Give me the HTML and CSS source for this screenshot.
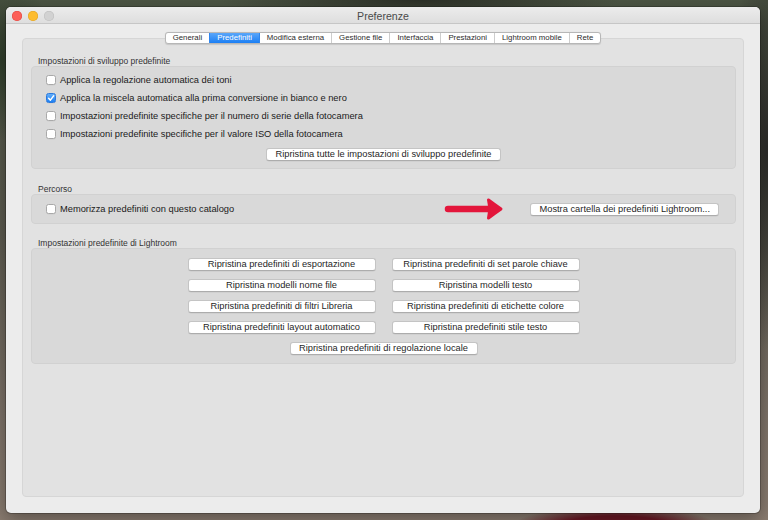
FILE: index.html
```html
<!DOCTYPE html>
<html lang="it">
<head>
<meta charset="utf-8">
<title>Preferenze</title>
<link rel="stylesheet" href="styles.css">
</head>
<body>
<div class="window">
  <div class="titlebar">
    <div class="lights">
      <span class="light red"></span>
      <span class="light yellow"></span>
      <span class="light gray"></span>
    </div>
    <div class="title">Preferenze</div>
    <div></div>
  </div>
  <div class="content">
    <div class="tabs">
      <span class="tab">Generali</span>
      <span class="tab active">Predefiniti</span>
      <span class="tab">Modifica esterna</span>
      <span class="tab">Gestione file</span>
      <span class="tab">Interfaccia</span>
      <span class="tab">Prestazioni</span>
      <span class="tab">Lightroom mobile</span>
      <span class="tab">Rete</span>
    </div>
    <div class="tabview">
      <div class="group-label">Impostazioni di sviluppo predefinite</div>
      <div class="group group-develop">
        <div class="check"><span class="box"></span><span class="check-text">Applica la regolazione automatica dei toni</span></div>
        <div class="check"><span class="box checked"><svg viewBox="0 0 10 10" width="10" height="10"><path d="M2.6 5.3 L4.4 7.1 L7.6 2.9" fill="none" stroke="#fff" stroke-width="1.5" stroke-linecap="round" stroke-linejoin="round"/></svg></span><span class="check-text">Applica la miscela automatica alla prima conversione in bianco e nero</span></div>
        <div class="check"><span class="box"></span><span class="check-text">Impostazioni predefinite specifiche per il numero di serie della fotocamera</span></div>
        <div class="check"><span class="box"></span><span class="check-text">Impostazioni predefinite specifiche per il valore ISO della fotocamera</span></div>
        <div class="btn-row"><span class="btn">Ripristina tutte le impostazioni di sviluppo predefinite</span></div>
      </div>

      <div class="group-label label-path">Percorso</div>
      <div class="group group-path">
        <div class="check"><span class="box"></span><span class="check-text">Memorizza predefiniti con questo catalogo</span></div>
        <svg class="arrow" viewBox="0 0 60 24" width="60" height="24">
          <path d="M4 12 H47" stroke="#e3163b" stroke-width="6.5" stroke-linecap="round" fill="none"/>
          <path d="M44.5 3 Q50.5 7.5 57 12 Q50.5 16.5 44.5 21 Q46.5 12 44.5 3 Z" fill="#e3163b" stroke="#e3163b" stroke-width="3" stroke-linejoin="round"/>
        </svg>
        <span class="btn">Mostra cartella dei predefiniti Lightroom...</span>
      </div>

      <div class="group-label label-lr">Impostazioni predefinite di Lightroom</div>
      <div class="group group-grid">
        <span class="btn">Ripristina predefiniti di esportazione</span>
        <span class="btn">Ripristina predefiniti di set parole chiave</span>
        <span class="btn">Ripristina modelli nome file</span>
        <span class="btn">Ripristina modelli testo</span>
        <span class="btn">Ripristina predefiniti di filtri Libreria</span>
        <span class="btn">Ripristina predefiniti di etichette colore</span>
        <span class="btn">Ripristina predefiniti layout automatico</span>
        <span class="btn">Ripristina predefiniti stile testo</span>
        <span class="btn wide">Ripristina predefiniti di regolazione locale</span>
      </div>
    </div>
  </div>
</div>
</body>
</html>
```

FILE: styles.css
```css
* {
  box-sizing: border-box;
}

html, body {
  margin: 0;
  height: 520px;
  overflow: hidden;
}

body {
  padding: 7px 0 0 6px;
  font-family: "Liberation Sans", Arial, sans-serif;
  background:
    radial-gradient(ellipse 105px 22px at 615px 528px, #6a1824 0%, #6a1824 55%, rgba(106,24,36,0) 100%),
    radial-gradient(ellipse 60px 80px at 0px 60px, #2f3d2a 0%, rgba(47,61,42,0) 100%),
    radial-gradient(ellipse 200px 20px at 420px 0px, #2c3027 0%, rgba(44,48,39,0) 100%),
    radial-gradient(ellipse 40px 200px at 768px 150px, #2a2a27 0%, rgba(42,42,39,0) 100%),
    linear-gradient(to bottom, #4b5443 0%, #5c5a4f 45%, #7d7268 80%, #8a7c70 100%);
}

.window {
  width: 754px;
  height: 506px;
  display: flex;
  flex-direction: column;
  background: #ececec;
  border-radius: 5px;
  overflow: hidden;
  box-shadow: 0 0 0 1px rgba(0, 0, 0, 0.22), 0 6px 18px rgba(0, 0, 0, 0.35);
}

.titlebar {
  height: 17px;
  display: grid;
  grid-template-columns: 1fr auto 1fr;
  align-items: center;
  background: linear-gradient(to bottom, #ececec, #dedede);
  border-bottom: 1px solid #c6c6c6;
}

.lights {
  display: flex;
  gap: 6px;
  padding-left: 6px;
  padding-top: 1px;
}

.light {
  width: 10px;
  height: 10px;
  border-radius: 50%;
}

.light.red {
  background: #fc5f57;
  box-shadow: inset 0 0 0 0.5px #e0443e;
}

.light.yellow {
  background: #fdbc2e;
  box-shadow: inset 0 0 0 0.5px #dea123;
}

.light.gray {
  background: #d2d2d2;
  box-shadow: inset 0 0 0 0.5px #bdbdbd;
}

.title {
  font-size: 10.6px;
  line-height: 14px;
  padding-top: 2px;
  color: #4a4a4a;
}

.content {
  flex: 1;
  display: flex;
  flex-direction: column;
  padding: 8px 16px 16px;
}

.tabs {
  align-self: center;
  display: flex;
  height: 12px;
  margin-bottom: -6px;
  position: relative;
  z-index: 1;
  background: #fff;
  border: 1px solid #b7b7b7;
  border-radius: 3px;
  overflow: hidden;
  box-shadow: 0 0.5px 1px rgba(0, 0, 0, 0.12);
}

.tab {
  font-size: 7.8px;
  line-height: 10px;
  padding: 0 7px;
  color: #2b2b2b;
  white-space: nowrap;
}

.tab + .tab {
  border-left: 1px solid #cdcdcd;
}

.tab.active {
  background: linear-gradient(to bottom, #5aa6f9, #1b7ff4);
  color: #fff;
  border-left-color: #2f86ee;
}

.tab.active + .tab {
  border-left-color: #2f86ee;
}

.tabview {
  flex: 1;
  background: #e2e2e2;
  border: 1px solid #d6d6d6;
  border-radius: 4px;
  padding: 17px 7px 0 8px;
}

.group-label {
  font-size: 8.5px;
  line-height: 10px;
  height: 10px;
  padding-left: 7px;
  color: #333;
  white-space: nowrap;
}

.label-path {
  margin-top: 15px;
}

.label-lr {
  margin-top: 14px;
}

.group {
  background: #d9d9d9;
  border: 1px solid #d1d1d1;
  border-radius: 4px;
}

.group-develop {
  padding: 4px 14px 7px;
}

.check {
  display: flex;
  align-items: center;
  height: 18px;
}

.box {
  flex: none;
  width: 10px;
  height: 10px;
  border-radius: 2.5px;
  background: #fff;
  border: 1px solid #a9a9a9;
  box-shadow: 0 0.5px 0 rgba(0, 0, 0, 0.06);
}

.box.checked {
  background: linear-gradient(to bottom, #62adf9, #1e80f3);
  border-color: #2b79dd;
}

.box.checked svg {
  display: block;
  margin: -1px;
}

.check-text {
  margin-left: 4px;
  font-size: 9.3px;
  line-height: 12px;
  color: #1a1a1a;
  white-space: nowrap;
}

.btn-row {
  display: flex;
  justify-content: center;
  margin-top: 5px;
}

.btn {
  display: block;
  height: 13px;
  padding: 0 8px;
  background: #fff;
  border: 1px solid #c4c4c4;
  border-bottom-color: #acacac;
  border-radius: 3px;
  font-size: 9.3px;
  line-height: 11px;
  color: #1f1f1f;
  text-align: center;
  white-space: nowrap;
  box-shadow: 0 0.5px 0.5px rgba(0, 0, 0, 0.08);
}

.group-path {
  display: flex;
  align-items: center;
  height: 30px;
  padding: 0 16px 0 14px;
}

.arrow {
  flex: none;
  margin: -3px 26px -3px auto;
  display: block;
}

.group-grid {
  display: grid;
  grid-template-columns: repeat(2, 188px);
  gap: 8px 16px;
  justify-content: center;
  padding: 9px 0 8px;
}

.btn.wide {
  grid-column: 1 / -1;
  justify-self: center;
  width: 188px;
}
```
